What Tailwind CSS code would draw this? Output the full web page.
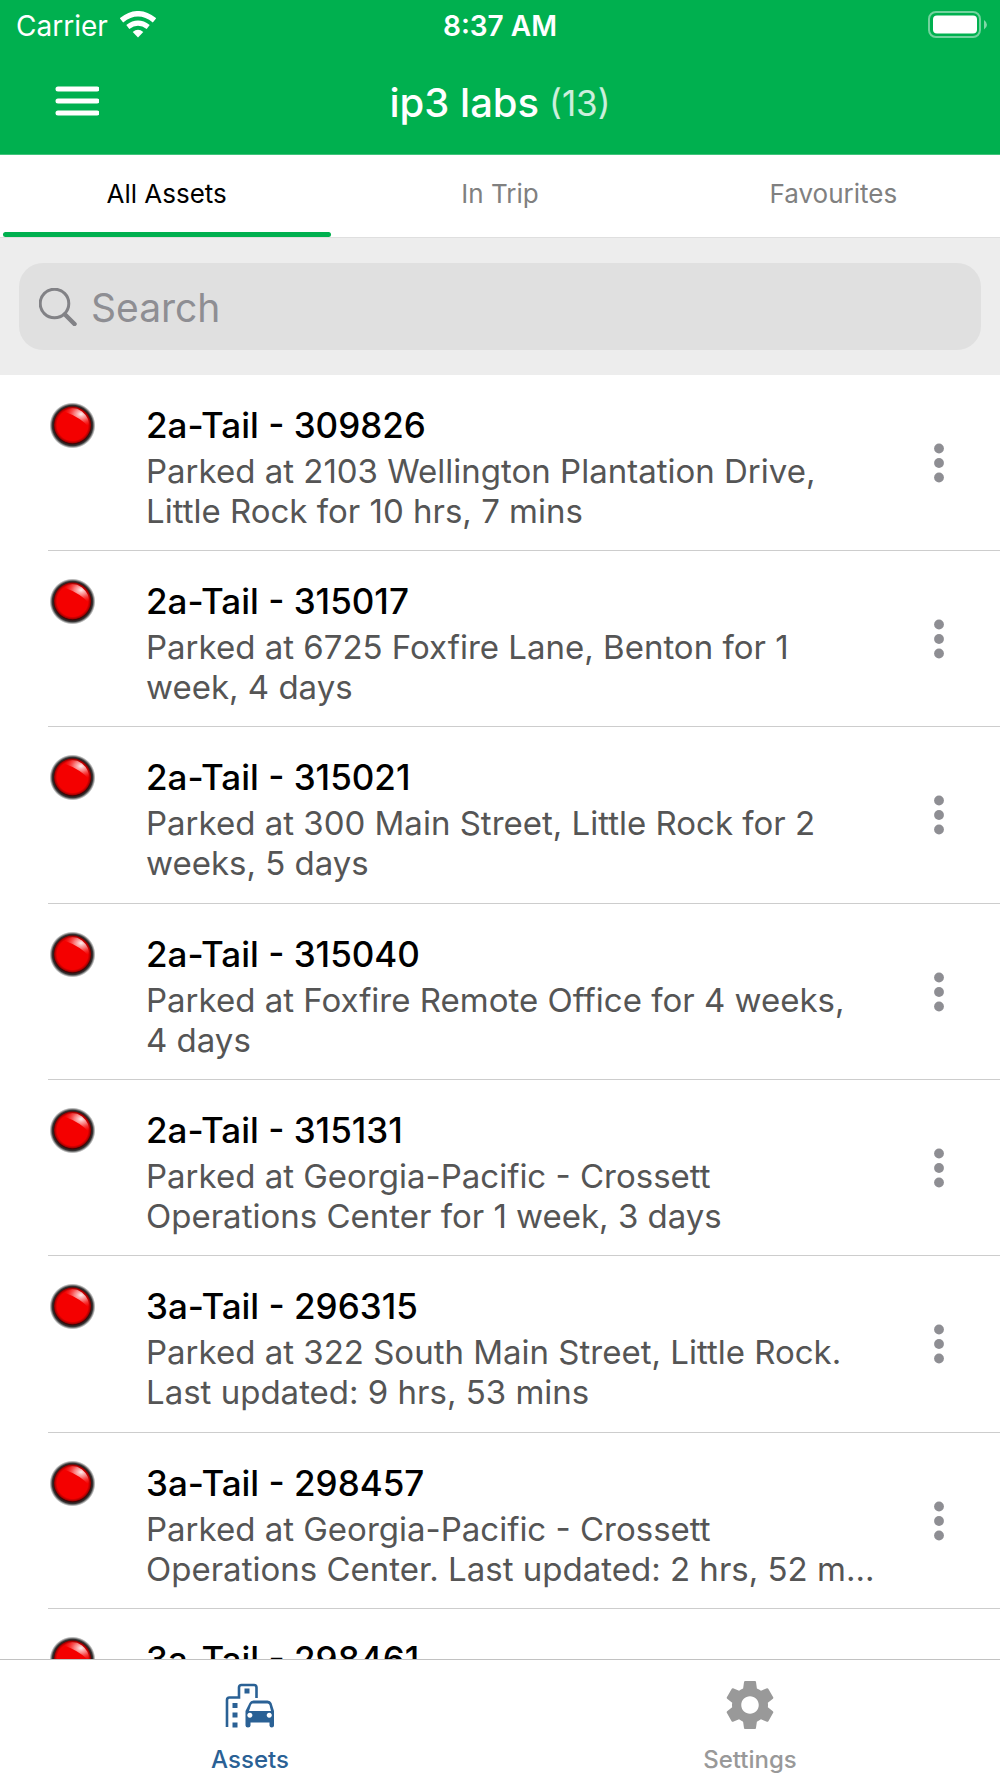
<!DOCTYPE html>
<html lang="en">
<head>
<meta charset="utf-8">
<meta name="viewport" content="width=device-width, initial-scale=1">
<title>ip3 labs</title>
<script src="https://cdn.jsdelivr.net/npm/@tailwindcss/browser@4"></script>
</head>
<body class="bg-white font-['Inter',sans-serif] text-black">
<svg class="absolute size-0" aria-hidden="true">
  <defs>
    <radialGradient id="rim"><stop offset="0.78" stop-color="#300"/><stop offset="0.88" stop-color="#111" stop-opacity="0.85"/><stop offset="1" stop-color="#222" stop-opacity="0"/></radialGradient>
    <radialGradient id="ball"><stop offset="0.84" stop-color="#f40000"/><stop offset="1" stop-color="#8c0000"/></radialGradient>
    <radialGradient id="shine" cx="0.68" cy="0.3" r="0.65"><stop offset="0" stop-color="#fff" stop-opacity="0.95"/><stop offset="0.4" stop-color="#ffd0d0" stop-opacity="0.6"/><stop offset="1" stop-color="#ff4040" stop-opacity="0"/></radialGradient>
  </defs>
  <symbol id="status" viewBox="0 0 48 48">
    <circle cx="24.500" cy="24.500" r="23" fill="url(#rim)"/>
    <circle cx="24.500" cy="24" r="18.500" fill="url(#ball)"/>
    <path d="M15 10Q25 4 34 10.500Q42 17 41.500 27Q34 17 15 10Z" fill="url(#shine)"/>
  </symbol>
  <symbol id="dots" viewBox="0 0 10 40"><circle cx="5" cy="5.500" r="4.900"/><circle cx="5" cy="20" r="4.900"/><circle cx="5" cy="34.500" r="4.900"/></symbol>
</svg>
<div class="flex h-screen flex-col overflow-hidden">
  <header class="shrink-0 border-b border-[#40c47b] bg-[#00b04f] text-white">
    <div class="grid h-[52px] grid-cols-3 items-center px-3">
      <div class="flex items-center gap-3 pl-1 text-[28px]">
        <span>Carrier</span>
        <svg class="mb-1 h-[27px] w-9" viewBox="0 0 36 27" fill="none" stroke="#fff" aria-label="Wi-Fi"><path d="M1.500 9.300Q18-3.800 34.500 9.300" stroke-width="5.400"/><path d="M7.800 16Q18 8.200 28.200 16" stroke-width="5"/><path d="M12.700 21Q18 16.600 23.300 21L18 26.500Z" fill="#fff" stroke="none"/></svg>
      </div>
      <span class="text-center text-[28px] font-semibold">8:37 AM</span>
      <svg class="mb-1 h-[27px] w-[60px] justify-self-end" viewBox="0 0 60 27" aria-label="Battery"><rect x="1" y="1" width="51" height="25" rx="7" fill="none" stroke="#fff" stroke-opacity=".45" stroke-width="2"/><rect x="5" y="4.500" width="44" height="18" rx="4" fill="#fff"/><path d="M56 9v9.500q3-2 3-4.700T56 9Z" fill="#fff" fill-opacity=".5"/></svg>
    </div>
    <div class="grid h-[102px] grid-cols-[1fr_auto_1fr] items-center px-[55px]">
      <button class="mb-1 w-11" aria-label="Menu"><svg class="h-[30px] w-11" viewBox="0 0 44 30" stroke="#fff" stroke-width="5" stroke-linecap="round"><path d="M3 3h39M3 15h39M3 27h39"/></svg></button>
      <h1 class="flex items-center gap-[10px] text-[40px] font-medium">ip3 labs <span class="text-[35px] font-normal text-white/80">(13)</span></h1>
    </div>
  </header>
  <nav class="grid h-[83px] shrink-0 grid-cols-3 border-b border-[#dfdfdf] text-[26px] text-[#808080]">
    <a href="#all" class="relative flex items-center justify-center pb-[6px] text-black">All Assets<span class="absolute right-[2px] bottom-0 left-[3px] h-[5px] rounded-full bg-[#00b04f]"></span></a>
    <a href="#trip" class="flex items-center justify-center pb-[6px]">In Trip</a>
    <a href="#favourites" class="flex items-center justify-center pb-[6px]">Favourites</a>
  </nav>
  <div class="shrink-0 bg-[#ededed] px-[19px] py-[25px]">
    <label class="flex h-[87px] items-center gap-[14px] rounded-[24px] bg-[#e0e0e0] px-5">
      <svg class="size-[38px] shrink-0" viewBox="0 0 38 38" fill="none" stroke="#828286" stroke-linecap="round"><circle cx="15.500" cy="15.500" r="14.300" stroke-width="3"/><path d="M26 26.500L35.500 36" stroke-width="4.500"/></svg>
      <input type="search" aria-label="Search" placeholder="Search" class="min-w-0 flex-1 bg-transparent pt-1 text-[39px] outline-none placeholder:text-[#8e8e93]">
    </label>
  </div>
  <main class="min-h-0 flex-1 overflow-hidden">
    <ul id="assets"></ul>
  </main>
  <footer class="grid h-[119px] shrink-0 grid-cols-2 border-t border-[#c2c2c2] text-[24px] leading-[32px] font-medium">
    <a href="#assets" class="flex flex-col items-center gap-[14px] pt-5 text-[#2a6195]">
      <svg class="size-[50px]" viewBox="0 0 50 50" fill="none" stroke="currentColor"><path d="M2 47V20Q2 17.500 4.500 17.500H14V7.500Q14 5 16.500 5H29Q31.500 5 31.500 7.500V18" stroke-width="2.600"/><path d="M19.500 8.500h5v5h-5zM7.500 23h5v5h-5zM7.500 32.500h5v5h-5zM7.500 42.500h5v5h-5z" fill="currentColor" stroke="none"/><path fill-rule="evenodd" d="M24.500 23Q25.500 20.500 28.500 20.500H42.500Q45.500 20.500 46.500 23L49 31V45.500Q49 47.500 46.800 47.500T44.500 45.500V42.500H25.500V45.500Q25.500 47.500 23 47.500T20.500 45.500V31ZM27.500 23.500Q26.500 23.500 26 25L24 31H46L44.500 25Q44 23.500 42.500 23.500ZM24.800 32.700a2.500 2.500 0 1 0 .1 0ZM44.200 32.700a2.500 2.500 0 1 0 .1 0Z" fill="currentColor" stroke="none"/></svg>
      <span>Assets</span>
    </a>
    <a href="#settings" class="flex flex-col items-center gap-[14px] pt-5 text-[#999]">
      <svg class="size-[50px]" viewBox="2 2 20 20" fill="currentColor"><path d="M19.140 12.940c.040-.300.060-.610.060-.940 0-.320-.020-.640-.070-.940l2.030-1.580c.180-.140.230-.410.120-.610l-1.920-3.320c-.120-.220-.370-.290-.590-.220l-2.390.960c-.500-.380-1.030-.700-1.620-.940l-.360-2.540c-.040-.240-.240-.410-.480-.410h-3.840c-.240 0-.430.170-.470.410l-.360 2.540c-.590.240-1.130.570-1.620.940l-2.390-.960c-.220-.080-.470 0-.590.220L2.740 8.870c-.120.210-.080.470.120.610l2.030 1.580c-.050.300-.090.630-.090.940s.020.640.070.940l-2.030 1.580c-.180.140-.230.410-.120.610l1.920 3.320c.120.220.370.290.590.220l2.390-.960c.500.380 1.030.700 1.620.940l.360 2.540c.050.240.240.410.480.410h3.840c.240 0 .440-.170.470-.410l.360-2.540c.590-.240 1.130-.560 1.620-.940l2.390.960c.220.080.470 0 .590-.220l1.920-3.320c.120-.220.070-.470-.120-.610l-2.010-1.580zM12 15.500c-1.930 0-3.500-1.570-3.500-3.500s1.570-3.500 3.500-3.500 3.500 1.570 3.500 3.500-1.570 3.500-3.500 3.500z"/></svg>
      <span>Settings</span>
    </a>
  </footer>
</div>
<script>
const assets = [
  ["2a-Tail - 309826", "Parked at 2103 Wellington Plantation Drive, Little Rock for 10 hrs, 7 mins"],
  ["2a-Tail - 315017", "Parked at 6725 Foxfire Lane, Benton for 1 week, 4 days"],
  ["2a-Tail - 315021", "Parked at 300 Main Street, Little Rock for 2 weeks, 5 days"],
  ["2a-Tail - 315040", "Parked at Foxfire Remote Office for 4 weeks, 4&nbsp;days"],
  ["2a-Tail - 315131", "Parked at Georgia-Pacific - Crossett Operations Center for 1 week, 3 days"],
  ["3a-Tail - 296315", "Parked at 322 South Main Street, Little Rock. Last updated: 9 hrs, 53 mins"],
  ["3a-Tail - 298457", "Parked at Georgia-Pacific - Crossett Operations Center. Last updated: 2 hrs, 52 m..."],
  ["3a-Tail - 298461", ""]
];
document.getElementById("assets").innerHTML = assets.map(([name, place]) => `
  <li class="ml-12 flex h-[176px] border-b border-[#cdcdcd] nth-[3n]:h-[177px]">
    <svg class="mt-[26px] size-12 shrink-0"><use href="#status"/></svg>
    <div class="ml-[50px] min-w-0 flex-1 pt-7">
      <h2 class="mb-1 text-[35px] leading-[44px] font-medium">${name}</h2>
      <p class="line-clamp-2 text-[33px] leading-[40px] text-[#555]">${place}</p>
    </div>
    <button class="mr-2 flex w-[106px] items-center justify-center self-stretch" aria-label="More options"><svg class="h-10 w-[10px] fill-[#8e8e93]"><use href="#dots"/></svg></button>
  </li>`).join("");
</script>
</body>
</html>
